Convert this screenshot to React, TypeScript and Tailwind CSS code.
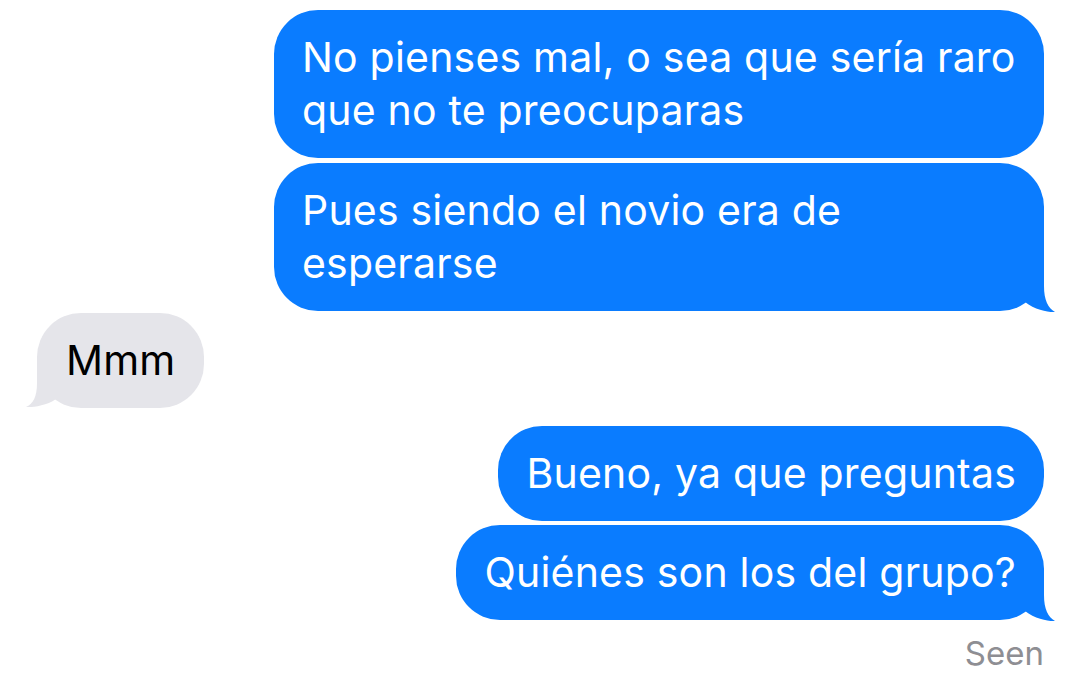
import React from "react";

const BLUE = "#0a7cff";

function RightTail() {
  return (
    <svg
      className="absolute right-[-16px] bottom-[-3px] w-[50px] h-[52px]"
      viewBox="0 0 50 52"
    >
      <path
        d="M34 0 L34 24 C34 38 38 46 45 50 C39 50.5 25 48 15 40 L15 0 Z"
        fill={BLUE}
      />
    </svg>
  );
}

function LeftTail() {
  return (
    <svg
      className="absolute left-[-16px] bottom-[-3px] w-[50px] h-[52px]"
      viewBox="0 0 50 52"
    >
      <path
        d="M16 0 L16 24 C16 38 12 45 5 48 C11 48.5 25 47 35 40 L35 0 Z"
        fill="#e5e5ea"
      />
    </svg>
  );
}

function Out({ text, tail, className = "" }: { text: string; tail?: boolean; className?: string }) {
  return (
    <div
      className={`relative max-w-[770px] rounded-[44px] bg-[#0a7cff] px-[28px] py-[21px] text-white ${className}`}
    >
      <div className="relative z-10">{text}</div>
      {tail && <RightTail />}
    </div>
  );
}

export default function App() {
  return (
    <div className="w-[1080px] h-[697px] bg-white overflow-hidden pt-[10px] pl-[37px] pr-[36px] flex flex-col font-['Inter',sans-serif] text-[41px] leading-[53px] tracking-[0.2px]">
      <div className="flex flex-col items-end">
        <Out text="No pienses mal, o sea que sería raro que no te preocuparas" />
        <Out className="mt-[5px]" tail text="Pues siendo el novio era de esperarse" />
      </div>
      <div className="mt-[2px] self-start relative rounded-[44px] bg-[#e5e5ea] px-[29px] py-[21px] text-black">
        <div className="relative z-10">Mmm</div>
        <LeftTail />
      </div>
      <div className="mt-[18px] flex flex-col items-end">
        <Out text="Bueno, ya que preguntas" />
        <Out className="mt-[4px]" tail text="Quiénes son los del grupo?" />
        <div className="mt-[13px] text-[33px] leading-[40px] tracking-normal text-[#8e8e93]">Seen</div>
      </div>
    </div>
  );
}
